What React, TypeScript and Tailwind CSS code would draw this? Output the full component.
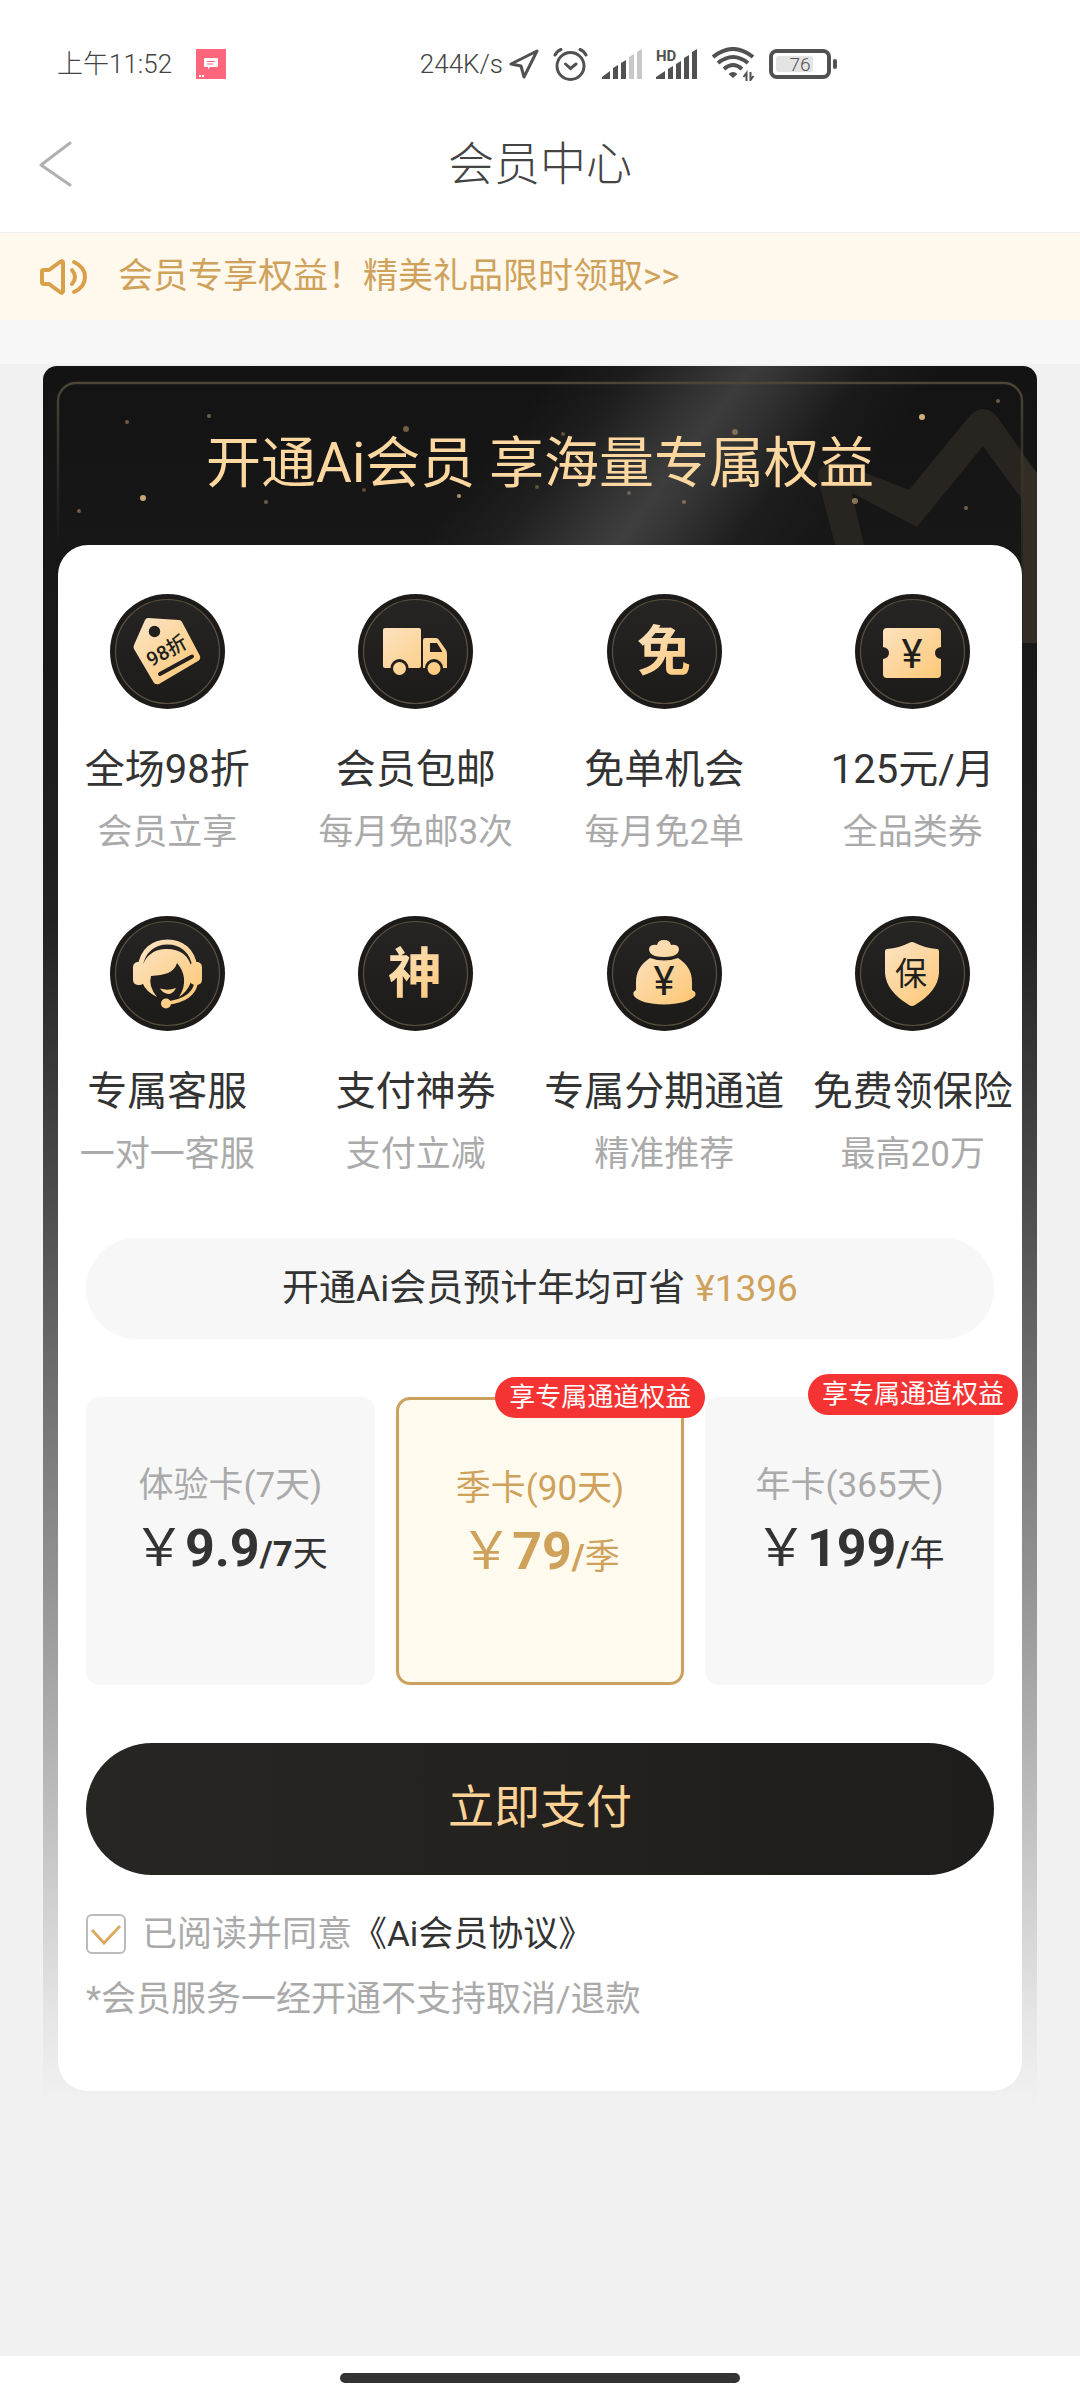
import { useState } from 'react';
import type { ReactNode } from 'react';

const GOLD = 'url(#gold)';
const INK = '#211f1d';

const stars = [
    { x: 84, y: 56, r: 2, o: 0.4 },
    { x: 166, y: 50, r: 2, o: 0.4 },
    { x: 363, y: 63, r: 3, o: 0.4 },
    { x: 520, y: 68, r: 2, o: 0.3 },
    { x: 692, y: 66, r: 3, o: 0.4 },
    { x: 879, y: 51, r: 3, o: 0.85 },
    { x: 955, y: 35, r: 2, o: 0.4 },
    { x: 100, y: 132, r: 3, o: 0.8 },
    { x: 36, y: 145, r: 2, o: 0.4 },
    { x: 223, y: 136, r: 2, o: 0.4 },
    { x: 321, y: 124, r: 2, o: 0.3 },
    { x: 416, y: 130, r: 2, o: 0.7 },
    { x: 494, y: 121, r: 2, o: 0.3 },
    { x: 586, y: 127, r: 2, o: 0.3 },
    { x: 641, y: 136, r: 2, o: 0.4 },
    { x: 812, y: 135, r: 3, o: 0.5 },
    { x: 923, y: 142, r: 2, o: 0.4 },
];

const IconText = ({ x, y, size, weight, fill, rotate, children }: any) => (
    <text
        x={x}
        y={y}
        fontSize={size}
        fontWeight={weight}
        fill={fill}
        textAnchor="middle"
        transform={rotate ? `rotate(${rotate} ${x} ${y})` : undefined}
    >
        {children}
    </text>
);

function Badge({ children }: { children: ReactNode }) {
    return (
        <svg viewBox="0 0 115 115" className="size-[115px]" aria-hidden="true">
            <defs>
                <linearGradient id="gold" gradientUnits="userSpaceOnUse" x1="30" y1="28" x2="86" y2="88">
                    <stop offset="0" stopColor="#fbe3c1" />
                    <stop offset="1" stopColor="#fec775" />
                </linearGradient>
                <linearGradient id="disc" x1="0" y1="0" x2="0" y2="1">
                    <stop offset="0" stopColor="#272523" />
                    <stop offset="1" stopColor="#1d1b19" />
                </linearGradient>
            </defs>
            <circle cx="57.5" cy="57.5" r="57.5" fill="#1c1b1a" />
            <circle cx="57.5" cy="57.5" r="52" fill="url(#disc)" stroke="#5c5140" strokeWidth="1.2" />
            {children}
        </svg>
    );
}

const TagIcon = () => (
    <Badge>
        <path
            d="M38 24 L69 26 Q71 26 72 28 L90 62 Q91 65 88 67 L49 90 Q46 91 44 89 L24 55 Q23 53 24 51 L35 26 Q36 24 38 24Z"
            fill={GOLD}
        />
        <circle cx="44.5" cy="37.5" r="5.7" fill={INK} />
        <path d="M50 80 L82 62.5" stroke={INK} strokeWidth="4" strokeLinecap="round" />
        <IconText x={60} y={63} size={20} weight={500} fill={INK} rotate={-29}>98折</IconText>
    </Badge>
);

const TruckIcon = () => (
    <Badge>
        <rect x="25" y="34" width="38" height="40" rx="2" fill={GOLD} />
        <path d="M67 44 H78 Q80 44 81 46 L88 56 Q89 58 89 60 V74 H65 V46 Q65 44 67 44Z" fill={GOLD} />
        <path d="M72 49 H79 L84 57 V58 H72Z" fill={INK} />
        <circle cx="41.5" cy="74" r="9" fill={INK} />
        <circle cx="41.5" cy="74.5" r="6.5" fill={GOLD} />
        <circle cx="76" cy="74" r="9" fill={INK} />
        <circle cx="76" cy="74.5" r="6.5" fill={GOLD} />
    </Badge>
);

const FreeIcon = () => (
    <Badge>
        <IconText x={57} y={77} size={54} weight={700} fill={GOLD}>免</IconText>
    </Badge>
);

const TicketIcon = () => (
    <Badge>
        <path
            d="M32 34 H82 Q86 34 86 38 V53 Q80 54 80 59 Q80 64 86 65 V80 Q86 84 82 84 H32 Q28 84 28 80 V65 Q34 64 34 59 Q34 54 28 53 V38 Q28 34 32 34Z"
            fill={GOLD}
        />
        <IconText x={57} y={74} size={40} weight={400} fill={INK}>¥</IconText>
    </Badge>
);

const ServiceIcon = () => (
    <Badge>
        <path d="M30 52 C32 34 44 26 57.5 26 C71 26 83 34 85 52" fill="none" stroke={GOLD} strokeWidth="5" />
        <rect x="23" y="46" width="12" height="23" rx="5" fill={GOLD} />
        <rect x="80" y="46" width="12" height="23" rx="5" fill={GOLD} />
        <path
            d="M32 53 C35 38 46 33 57 33 C70 33 79 39 82 53 L81 66 Q77 76 69 81 Q75 72 74 62 Q73 54 67 47 C64 57 55 59 41 60 Q38 70 47 81 Q36 76 32 66Z"
            fill={GOLD}
        />
        <path d="M50 72.5 Q58 75 66 72 Q63 78 58 78 Q53 77 50 72.5Z" fill={GOLD} />
        <path d="M86 68 Q82 84 58 87" fill="none" stroke={GOLD} strokeWidth="3.5" />
        <circle cx="56" cy="87.5" r="5" fill={GOLD} />
    </Badge>
);

const PayIcon = () => (
    <Badge>
        <IconText x={57} y={77} size={54} weight={700} fill={GOLD}>神</IconText>
    </Badge>
);

const BagIcon = () => (
    <Badge>
        <path
            d="M48 40 Q42 38 42 33 Q43 28 50 29 Q51 24 57 24 Q63 24 64 29 Q71 28 72 33 Q72 38 66 40 Q57 42 48 40Z"
            fill={GOLD}
        />
        <path
            d="M43 42 Q57 47 71 42 Q85 51 85 66 V74 Q90 76 88 80 Q80 88 57 88.5 Q34 88 27 80 Q25 76 29 74 V66 Q29 51 43 42Z"
            fill={GOLD}
        />
        <IconText x={57} y={79} size={40} weight={400} fill={INK}>¥</IconText>
    </Badge>
);

const ShieldIcon = () => (
    <Badge>
        <path
            d="M55 26.5 Q57 25.5 59 26.5 Q70 32 82 33 Q84 33 84 36 V57 Q83 75 60 89 Q57 91 54 89 Q31 75 30 57 V36 Q30 33 32 33 Q44 32 55 26.5Z"
            fill={GOLD}
        />
        <IconText x={56} y={69} size={32} weight={400} fill={INK}>保</IconText>
    </Badge>
);

const benefits = [
    { title: '全场98折', desc: '会员立享', icon: <TagIcon /> },
    { title: '会员包邮', desc: '每月免邮3次', icon: <TruckIcon /> },
    { title: '免单机会', desc: '每月免2单', icon: <FreeIcon /> },
    { title: '125元/月', desc: '全品类券', icon: <TicketIcon /> },
    { title: '专属客服', desc: '一对一客服', icon: <ServiceIcon /> },
    { title: '支付神券', desc: '支付立减', icon: <PayIcon /> },
    { title: '专属分期通道', desc: '精准推荐', icon: <BagIcon /> },
    { title: '免费领保险', desc: '最高20万', icon: <ShieldIcon /> },
];

const plans = [
    { id: 'trial', name: '体验卡(7天)', price: '9.9', per: '/7', unit: '天', tag: '' },
    { id: 'season', name: '季卡(90天)', price: '79', per: '/', unit: '季', tag: '享专属通道权益' },
    { id: 'year', name: '年卡(365天)', price: '199', per: '/', unit: '年', tag: '享专属通道权益' },
];

function StatusBar() {
    return (
        <div className="flex h-32 items-center justify-between pl-[57px] pr-[243px] text-[26px] font-light text-[#444]">
            <div className="flex items-center gap-6">
                <span>上午11:52</span>
                <svg viewBox="0 0 30 30" className="size-[30px]" aria-hidden="true">
                    <path d="M0 0H30V30H0Z" fill="#ff667c" />
                    <path d="M9 9H21Q22 9 22 10V17Q22 18 21 18H14L12 20.5V18H9Q8 18 8 17V10Q8 9 9 9Z" fill="#fff" />
                    <path d="M11 12.5H19M11 15H17" stroke="#ff667c" strokeWidth="1" />
                    <path d="M3 27H9" stroke="#fff" strokeWidth="2" strokeDasharray="2 1" />
                </svg>
            </div>
            <div className="flex items-center gap-3.5">
                <div className="flex items-center gap-1.5">
                    <span>244K/s</span>
                    <svg viewBox="0 0 30 30" className="size-[30px]" fill="none" stroke="#515151" strokeWidth="3" strokeLinejoin="round" aria-hidden="true">
                        <path d="M28 2L2 15L12 17L15 28Z" />
                    </svg>
                </div>
                <svg viewBox="0 0 35 35" className="size-[35px]" fill="none" stroke="#515151" strokeWidth="3" strokeLinecap="round" aria-hidden="true">
                    <circle cx="17.5" cy="19" r="13.5" />
                    <path d="M2 8Q4 4 8 2.5M33 8Q31 4 27 2.5M12.5 17L17.5 21.5L23 17" />
                </svg>
                <svg viewBox="0 0 40 30" className="h-[30px] w-10" fill="#515151" aria-hidden="true">
                    <path d="M0 30V28L8 22V30ZM11 30V19L16 16V30ZM19 30V14L24 11V30Z" />
                    <path d="M27 30V8L32 5V30ZM35 30V3L40 0V30Z" fill="#c8c8c8" />
                </svg>
                <svg viewBox="0 0 42 32" className="h-8 w-[42px] overflow-visible" fill="#515151" aria-hidden="true">
                    <path d="M0 31V29L9 23V31ZM12 31V21L17 18V31ZM20 31V16L25 13V31ZM28 31V10L33 7V31ZM36 31V4L41 1V31Z" />
                    <text x="0" y="13" fontSize="15" fontWeight="700">HD</text>
                </svg>
                <svg viewBox="0 0 43 34" className="h-[34px] w-[43px]" fill="none" stroke="#515151" strokeWidth="4" aria-hidden="true">
                    <path d="M1 10Q21 -6 41 10M6 16Q21 4 36 16M12 22Q21 14 30 22" />
                    <path d="M21 31L16.5 27Q21 23 25.5 27Z" fill="#515151" stroke="none" />
                    <path d="M34.5 34V26L31.5 30M38.5 25V33L41.5 29" strokeWidth="2" />
                </svg>
                <svg viewBox="0 0 68 30" className="h-[30px] w-[68px]" aria-hidden="true">
                    <rect x="2" y="2" width="58" height="26" rx="6" fill="none" stroke="#515151" strokeWidth="4" />
                    <rect x="7" y="7" width="37" height="16" rx="2" fill="#e4e4e4" />
                    <rect x="64" y="10" width="4" height="10" rx="2" fill="#515151" />
                    <text x="31" y="22" fontSize="19" textAnchor="middle" fill="#515151">76</text>
                </svg>
            </div>
        </div>
    );
}

function BannerArt() {
    return (
        <svg viewBox="0 0 994 277" className="absolute inset-x-0 top-0 w-full" aria-hidden="true">
            <defs>
                <linearGradient id="beam" gradientUnits="userSpaceOnUse" x1="517" y1="-3" x2="763" y2="186">
                    <stop offset="0" stopColor="#fff" stopOpacity="0" />
                    <stop offset="0.2" stopColor="#fff" stopOpacity="0.04" />
                    <stop offset="0.4" stopColor="#fff" stopOpacity="0.13" />
                    <stop offset="0.5" stopColor="#fff" stopOpacity="0.17" />
                    <stop offset="0.6" stopColor="#fff" stopOpacity="0.13" />
                    <stop offset="0.8" stopColor="#fff" stopOpacity="0.03" />
                    <stop offset="1" stopColor="#fff" stopOpacity="0" />
                </linearGradient>
                <linearGradient id="frame" gradientUnits="userSpaceOnUse" x1="0" y1="16" x2="0" y2="179">
                    <stop offset="0" stopColor="#4d4637" />
                    <stop offset="1" stopColor="#4d4637" stopOpacity="0" />
                </linearGradient>
            </defs>
            <rect width="994" height="277" fill="url(#beam)" />
            <path
                d="M792 179L776 117Q772 102 784 98Q792 95 800 98L866 124L925 52Q932 43 940 43Q948 43 955 52L994 107V277H978V132L940 80L874 161L809 127L821 179Z"
                fill="#28241f"
            />
            <path d="M980 90L994 107V277H980Z" fill="#322e26" />
            <rect x="15" y="17" width="964" height="240" rx="18" fill="none" stroke="url(#frame)" strokeWidth="2.5" />
            {stars.map((s) => (
                <circle key={`${s.x}-${s.y}`} cx={s.x} cy={s.y} r={s.r} fill="#f5cb8d" opacity={s.o} />
            ))}
        </svg>
    );
}

export default function App() {
    const [plan, setPlan] = useState('season');
    const [agreed, setAgreed] = useState(true);

    return (
        <div
            lang="zh-CN"
            className="flex min-h-screen flex-col bg-[#f1f1f1] font-['Roboto','Noto_Sans_CJK_SC',sans-serif] text-[#333]"
        >
            <header className="border-b border-[#eee] bg-white pb-8">
                <StatusBar />
                <div className="grid h-[72px] grid-cols-[72px_1fr_72px] items-center">
                    <button type="button" aria-label="返回" className="flex justify-end">
                        <svg viewBox="0 0 34 46" className="h-[46px] w-[34px]" fill="none" stroke="#b0b0b0" strokeWidth="3" strokeLinecap="round" strokeLinejoin="round">
                            <path d="M32 2L3 24L32 44" />
                        </svg>
                    </button>
                    <h1 className="text-center text-[46px] font-light leading-[72px] text-[#444]">会员中心</h1>
                </div>
            </header>

            <div className="flex h-[87px] items-center gap-[31px] bg-[#fff8ec] pl-10 text-[35px] text-[#cfa25c]">
                <svg viewBox="0 0 47 36" className="h-9 w-[47px]" fill="none" stroke="#d9a04c" strokeWidth="4" strokeLinecap="round" strokeLinejoin="round" aria-hidden="true">
                    <path d="M2 12Q2 11 4 11H9L20 3Q23 1 23 4V32Q23 35 20 33L9 25H4Q2 25 2 23Z" />
                    <path d="M32 11Q38 18 32 25M34 3Q45 8 45 18Q45 28 34 33" />
                </svg>
                <p className="pt-0.5">会员专享权益！精美礼品限时领取&gt;&gt;</p>
            </div>
            <div className="h-11 bg-[#f7f7f7]" />

            <main className="grow px-[43px] pt-0.5">
                <section className="relative overflow-hidden rounded-t-[14px] bg-[linear-gradient(to_bottom,#131313_0%,#1b1b1b_20%,#222_32%,#4c4c4c_48%,#777_61%,#aaa_77%,#e6e6e6_95%,#f1f1f1_100%)] px-[15px] pb-3.5">
                    <BannerArt />
                    <h2 className="relative h-[179px] pt-[59px] text-center text-[55px] leading-[76px] text-[#fcd7a0]">
                        开通Ai会员 享海量专属权益
                    </h2>

                    <div className="relative rounded-[30px] bg-white px-7 pb-[67px] pt-[49px]">
                        <ul className="-mx-[43px] grid grid-cols-4 gap-y-[59px]">
                            {benefits.map((b) => (
                                <li key={b.title} className="flex flex-col items-center whitespace-nowrap">
                                    {b.icon}
                                    <p className="mt-[31px] text-[40px] leading-[60px]">{b.title}</p>
                                    <p className="mt-2 text-[35px] leading-[49px] text-[#aaa]">{b.desc}</p>
                                </li>
                            ))}
                        </ul>

                        <p className="mt-[59px] flex h-[101px] items-center justify-center gap-2.5 rounded-full bg-[#f7f7f7] text-[37px]">
                            开通Ai会员预计年均可省 <span className="text-[#cfa25c]">¥1396</span>
                        </p>

                        <div className="mt-[58px] grid grid-cols-3 gap-[21px]" role="radiogroup" aria-label="会员套餐">
                            {plans.map((p) => (
                                <label
                                    key={p.id}
                                    className={
                                        'relative flex h-72 cursor-pointer flex-col items-center whitespace-nowrap rounded-[14px] pt-16 ' +
                                        (plan === p.id ? 'border-3 border-[#cba15f] bg-[#fffaee] text-[#cfa25c]' : 'bg-[#f7f7f7]')
                                    }
                                >
                                    <input
                                        type="radio"
                                        name="plan"
                                        className="sr-only"
                                        checked={plan === p.id}
                                        onChange={() => setPlan(p.id)}
                                    />
                                    <span className={'text-[35px] leading-[50px] ' + (plan === p.id ? '' : 'text-[#aaa]')}>{p.name}</span>
                                    <span className="text-[35px] leading-[76px]">
                                        <span className="text-[52px]">￥</span>
                                        <b className="text-[52px]">{p.price}</b>
                                        <b>{p.per}</b>
                                        {p.unit}
                                    </span>
                                    {p.tag && (
                                        <span className="absolute -right-6 -top-[23px] rounded-full bg-[#f53333] px-3.5 text-[26px] leading-[41px] text-white">
                                            {p.tag}
                                        </span>
                                    )}
                                </label>
                            ))}
                        </div>

                        <button
                            type="button"
                            className="mt-[58px] h-[132px] w-full rounded-full bg-linear-to-r from-[#282623] to-[#1e1d1b] pb-1 text-[46px] text-[#fed395]"
                        >
                            立即支付
                        </button>

                        <div className="mt-[39px] flex h-10 items-center text-[35px]">
                            <span className="relative mr-4 size-10">
                                <input
                                    id="agree"
                                    type="checkbox"
                                    checked={agreed}
                                    onChange={(e) => setAgreed(e.target.checked)}
                                    className="block size-10 appearance-none rounded-md border-2 border-[#bbb] bg-white"
                                />
                                {agreed && (
                                    <svg viewBox="0 0 40 40" className="pointer-events-none absolute inset-0 size-10" fill="none" stroke="#d9ab63" strokeWidth="3" aria-hidden="true">
                                        <path d="M6 16L18 29L34 12" />
                                    </svg>
                                )}
                            </span>
                            <label htmlFor="agree" className="pt-0.5 text-[#aaa]">已阅读并同意</label>
                            <a href="#agreement" className="pt-0.5">《Ai会员协议》</a>
                        </div>
                        <p className="mt-[22px] text-[35px] leading-[48px] text-[#aaa]">*会员服务一经开通不支持取消/退款</p>
                    </div>
                </section>
            </main>

            <footer className="flex h-11 items-center justify-center bg-white">
                <div className="h-2.5 w-[400px] rounded-full bg-[#333]" />
            </footer>
        </div>
    );
}
